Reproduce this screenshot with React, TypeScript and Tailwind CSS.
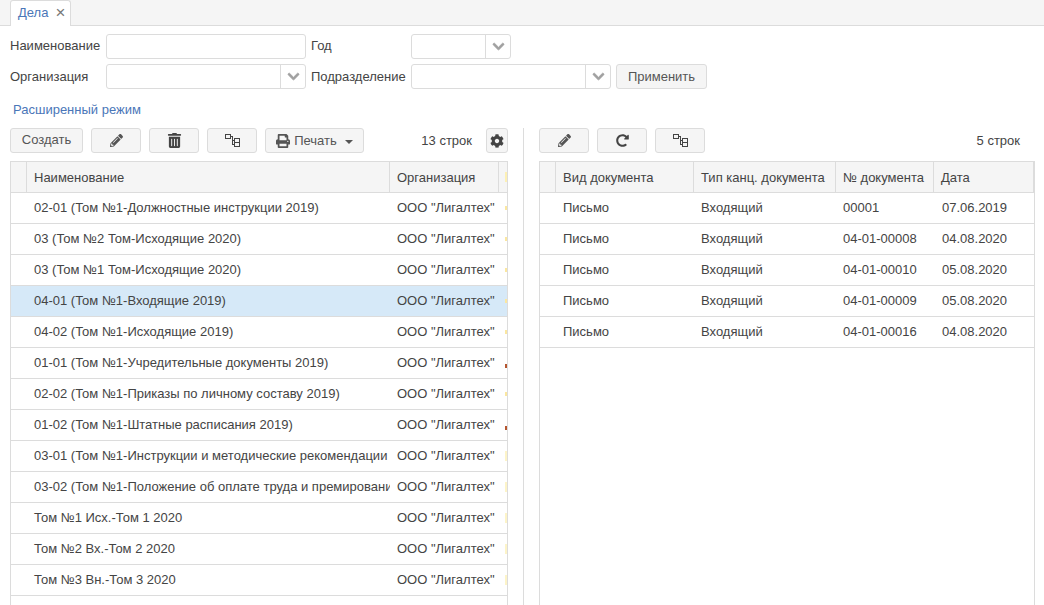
import { FaChevronDown, FaCog, FaPencilAlt, FaPrint, FaRedoAlt, FaTrashAlt } from 'react-icons/fa'
import { ReactNode } from 'react'

const leftRows = [
  ['02-01 (Том №1-Должностные инструкции 2019)', 'y'],
  ['03 (Том №2 Том-Исходящие 2020)', 'y'],
  ['03 (Том №1 Том-Исходящие 2020)', 'y'],
  ['04-01 (Том №1-Входящие 2019)', 'y'],
  ['04-02 (Том №1-Исходящие 2019)', 'y'],
  ['01-01 (Том №1-Учредительные документы 2019)', 'r'],
  ['02-02 (Том №1-Приказы по личному составу 2019)', 'y'],
  ['01-02 (Том №1-Штатные расписания 2019)', 'r'],
  ['03-01 (Том №1-Инструкции и методические рекомендации 2019)', 'y'],
  ['03-02 (Том №1-Положение об оплате труда и премировании 2019)', 'y'],
  ['Том №1 Исх.-Том 1 2020', 'y'],
  ['Том №2 Вх.-Том 2 2020', 'y'],
  ['Том №3 Вн.-Том 3 2020', 'y'],
]

const rightRows = [
  ['Письмо', 'Входящий', '00001', '07.06.2019'],
  ['Письмо', 'Входящий', '04-01-00008', '04.08.2020'],
  ['Письмо', 'Входящий', '04-01-00010', '05.08.2020'],
  ['Письмо', 'Входящий', '04-01-00009', '05.08.2020'],
  ['Письмо', 'Входящий', '04-01-00016', '04.08.2020'],
]

const TreeIcon = () => (
  <svg width="15" height="13" viewBox="0 0 15 13" fill="none" stroke="#444" strokeWidth="1" shapeRendering="crispEdges">
    <rect x="0.5" y="0.5" width="5" height="4" />
    <rect x="9.5" y="4.5" width="5" height="4" />
    <rect x="9.5" y="8.5" width="5" height="4" />
    <path d="M5.5 2.5H7.5V10.5H9.5M7.5 6.5H9.5" />
  </svg>
)

const Btn = ({ children, w }: { children: ReactNode; w: string }) => (
  <button className={`${w} h-[25px] flex items-center justify-center gap-1 rounded-[3px] border border-[#dcdcdc] bg-[#f5f5f5] text-[#555]`}>
    {children}
  </button>
)

const Combo = ({ w }: { w: string }) => (
  <div className={`${w} h-[25px] flex rounded-[3px] border border-[#dcdcdc] bg-white`}>
    <div className="flex-1" />
    <div className="w-[25px] flex items-center justify-center border-l border-[#dcdcdc]">
      <FaChevronDown className="text-[#a0a0a0] text-[13px] stroke-[30]" />
    </div>
  </div>
)

const App = () => {
  return (
    <div className="h-[605px] overflow-hidden bg-white text-[13px] text-[#444] font-['Liberation_Sans',sans-serif]">
      <div className="h-[26px] flex pl-[10px] border-b border-[#dcdcdc] bg-[#f5f5f5]">
        <div className="w-[61px] h-[26px] flex items-center gap-[7px] pl-[7px] pb-[2px] rounded-t-[3px] border border-b-0 border-[#dcdcdc] bg-white">
          <span className="text-[#4a76b8]">Дела</span>
          <span className="text-[#777] text-[17px] leading-none">×</span>
        </div>
      </div>

      <div className="pl-[10px] pt-[8px]">
        <div className="flex items-center h-[25px]">
          <span className="w-[96px] pb-[2px]">Наименование</span>
          <div className="w-[200px] h-[25px] rounded-[3px] border border-[#dcdcdc] bg-white" />
          <span className="w-[105px] pl-[5px] pb-[2px]">Год</span>
          <Combo w="w-[100px]" />
        </div>
        <div className="flex items-center h-[25px] mt-[5px]">
          <span className="w-[96px]">Организация</span>
          <Combo w="w-[200px]" />
          <span className="w-[105px] pl-[5px]">Подразделение</span>
          <Combo w="w-[200px]" />
          <button className="ml-[5px] w-[91px] h-[25px] rounded-[3px] border border-[#dcdcdc] bg-[#f5f5f5] text-[#555]">Применить</button>
        </div>
        <div className="pl-[3px] pt-[11px] h-[39px] text-[#4a76b8]">Расширенный режим</div>
      </div>

      <div className="flex pl-[10px]">
        <div className="w-[498px] shrink-0">
          <div className="flex items-center gap-[8px] h-[25px]">
            <Btn w="w-[73px] pb-[2px]">Создать</Btn>
            <Btn w="w-[50px]"><FaPencilAlt className="text-[13px]" /></Btn>
            <Btn w="w-[50px]"><FaTrashAlt className="text-[15px] text-[#444]" /></Btn>
            <Btn w="w-[50px]"><TreeIcon /></Btn>
            <Btn w="w-[99px]">
              <FaPrint className="text-[14px]" />
              <span>Печать</span>
              <span className="ml-[4px] mt-[2px] border-x-[4px] border-t-[4px] border-x-transparent border-t-[#555]" />
            </Btn>
            <span className="ml-auto mr-[6px]">13 строк</span>
            <button className="w-[22px] h-[25px] flex items-center justify-center rounded-[3px] border border-[#dcdcdc] bg-[#f5f5f5] text-[#444]">
              <FaCog className="text-[14px]" />
            </button>
          </div>
          <div className="mt-[8px] border-x border-t border-[#dcdcdc] h-[444px] overflow-hidden">
            <div className="flex h-[31px] border-b border-[#dcdcdc] bg-[#f5f5f5]">
              <div className="w-[16px] shrink-0 border-r border-[#dcdcdc]" />
              <div className="w-[363px] shrink-0 pl-[7px] pt-[2px] flex items-center border-r border-[#dcdcdc]">Наименование</div>
              <div className="w-[109px] shrink-0 pl-[7px] pt-[2px] flex items-center border-r border-[#dcdcdc]">Организация</div>
              <div className="flex-1 flex justify-end"><div className="w-[2px] mt-[10px] h-[10px] bg-[#fdf0b4]" /></div>
            </div>
            {leftRows.map(([name, mark], i) => (
              <div key={i} className={`flex h-[31px] border-b border-[#dcdcdc] ${i === 3 ? 'bg-[#d6e9f8]' : 'bg-white'}`}>
                <div className="w-[16px] shrink-0" />
                <div className="w-[363px] shrink-0 pl-[7px] flex items-center overflow-hidden whitespace-nowrap">{name}</div>
                <div className="w-[109px] shrink-0 pl-[7px] flex items-center whitespace-nowrap">ООО "Лигалтех"</div>
                <div className="flex-1 flex justify-end items-center">
                  <div className={mark === 'r' ? 'w-[2px] h-[4px] mt-[5px] bg-[#b5562f]' : i > 7 ? 'w-[2px] h-[10px] bg-[#fdf4c8]' : 'w-[2px] h-[4px] bg-[#fbe7a0]'} />
                </div>
              </div>
            ))}
          </div>
        </div>

        <div className="w-[31px] shrink-0 flex justify-center">
          <div className="w-px h-[477px] bg-[#dcdcdc]" />
        </div>

        <div className="w-[496px] shrink-0">
          <div className="flex items-center gap-[8px] h-[25px]">
            <Btn w="w-[50px]"><FaPencilAlt className="text-[13px]" /></Btn>
            <Btn w="w-[50px]"><FaRedoAlt className="text-[13px] text-[#444]" /></Btn>
            <Btn w="w-[50px]"><TreeIcon /></Btn>
            <span className="ml-auto mr-[15px]">5 строк</span>
          </div>
          <div className="mt-[8px] border-x border-t border-[#dcdcdc] h-[444px] overflow-hidden">
            <div className="flex h-[31px] border-b border-[#dcdcdc] bg-[#f5f5f5]">
              <div className="w-[16px] shrink-0 border-r border-[#dcdcdc]" />
              <div className="w-[138px] shrink-0 pl-[7px] pt-[2px] flex items-center border-r border-[#dcdcdc]">Вид документа</div>
              <div className="w-[142px] shrink-0 pl-[7px] pt-[2px] flex items-center border-r border-[#dcdcdc]">Тип канц. документа</div>
              <div className="w-[98px] shrink-0 pl-[7px] pt-[2px] flex items-center border-r border-[#dcdcdc]">№ документа</div>
              <div className="w-[100px] shrink-0 pl-[7px] pt-[2px] flex items-center border-r border-[#dcdcdc]">Дата</div>
            </div>
            {rightRows.map((row, i) => (
              <div key={i} className="flex h-[31px] border-b border-[#dcdcdc]">
                <div className="w-[16px] shrink-0" />
                <div className="w-[138px] shrink-0 pl-[7px] flex items-center">{row[0]}</div>
                <div className="w-[142px] shrink-0 pl-[7px] flex items-center">{row[1]}</div>
                <div className="w-[98px] shrink-0 pl-[7px] flex items-center">{row[2]}</div>
                <div className="w-[100px] shrink-0 pl-[8px] flex items-center">{row[3]}</div>
              </div>
            ))}
          </div>
        </div>
      </div>
    </div>
  )
}

export default App
